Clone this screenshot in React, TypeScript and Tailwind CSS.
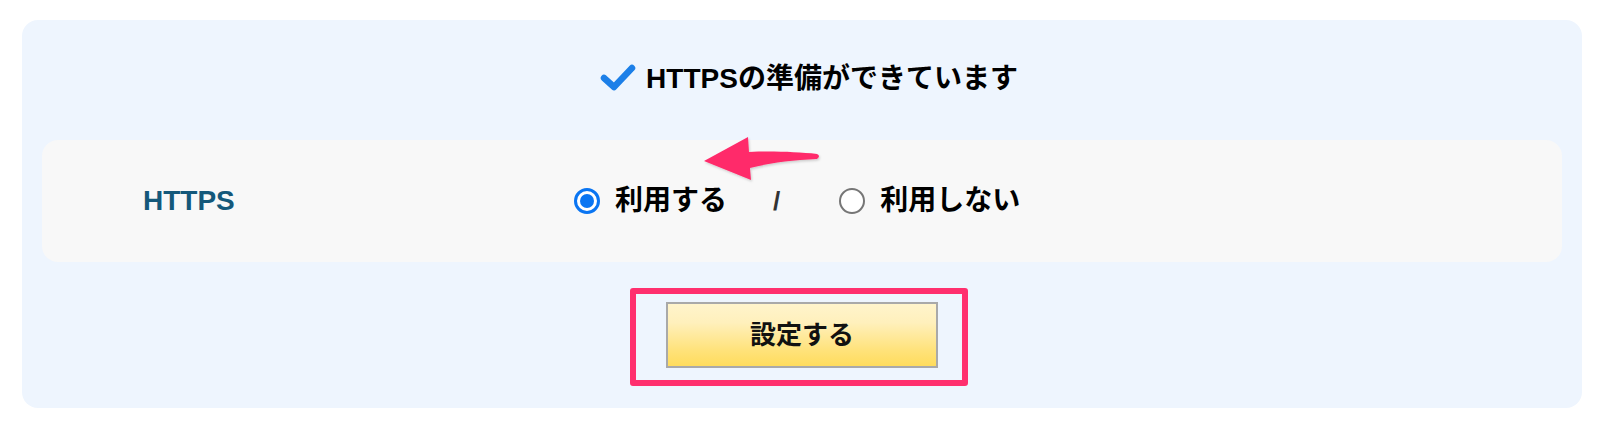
import React from "react";

const JP = { fontFamily: '"Liberation Sans", "Noto Sans CJK JP", sans-serif' };

function Radio({ checked }: { checked: boolean }) {
  if (checked) {
    return (
      <span className="flex h-[26px] w-[26px] items-center justify-center rounded-full border-[3px] border-[#0a75f2] bg-white">
        <span className="h-[14px] w-[14px] rounded-full bg-[#0a75f2]" />
      </span>
    );
  }
  return <span className="h-[26px] w-[26px] rounded-full border-2 border-[#767676] bg-white" />;
}

export default function App() {
  return (
    <div className="min-h-[432px] w-[1614px] bg-white pt-[20px] pl-[22px]" style={JP}>
      <div className="relative w-[1560px] rounded-[16px] bg-[#eef5fe] px-[20px] pt-[39px] pb-[22px]">
        <div className="flex h-[40px] items-center justify-center pl-[14px]">
          <svg width="36" height="28" viewBox="0 0 36 28" className="mr-[10px] mt-[-4px]">
            <defs>
              <filter id="b" x="-20%" y="-20%" width="140%" height="140%">
                <feGaussianBlur stdDeviation="0.7" />
              </filter>
            </defs>
            <polyline
              points="4,15 14,24 32,5"
              fill="none"
              stroke="#1a7fe8"
              strokeWidth="6.5"
              strokeLinecap="round"
              strokeLinejoin="round"
              filter="url(#b)"
            />
          </svg>
          <span className="text-[28px] font-bold leading-[40px] text-black">HTTPSの準備ができています</span>
        </div>

        <div className="mt-[41px] flex h-[122px] items-center rounded-[16px] bg-[#f8f8f8] pl-[101px]">
          <span className="w-[431px] text-[28px] font-bold text-[#14587a]">HTTPS</span>
          <label className="flex items-center">
            <Radio checked />
            <span className="ml-[15px] text-[28px] font-bold leading-[40px] text-black">利用する</span>
          </label>
          <span className="ml-[46px] text-[26px] font-bold text-[#333]">/</span>
          <label className="ml-[59px] flex items-center">
            <Radio checked={false} />
            <span className="ml-[15px] text-[28px] font-bold leading-[40px] text-black">利用しない</span>
          </label>
        </div>

        <div className="mt-[26px] flex justify-center">
          <div className="ml-[-6px] rounded-[3px] border-[6px] border-[#ff2f6e] pt-[8px] pb-[12px] pl-[30px] pr-[24px]">
            <button className="flex h-[66px] w-[272px] items-center justify-center border-2 border-[#a9a9a9] bg-[linear-gradient(180deg,#fff4cc_0%,#fff0bc_30%,#ffe27a_75%,#ffdc5c_100%)] text-[26px] font-bold text-[#111]">
              設定する
            </button>
          </div>
        </div>

        <svg
          className="absolute left-[680px] top-[112px]"
          width="125"
          height="75"
          viewBox="0 0 125 75"
        >
          <defs>
            <filter id="s" x="-10%" y="-20%" width="130%" height="150%">
              <feDropShadow dx="1" dy="1.5" stdDeviation="1.2" floodColor="#000" floodOpacity="0.18" />
            </filter>
          </defs>
          <path
            d="M2,29 L46,5 L47,20 C70,19 95,20 115,22 Q119,24 115,27 C90,28 68,31 48,36 L49,48 Z"
            fill="#ff2c6b"
            filter="url(#s)"
          />
        </svg>
      </div>
    </div>
  );
}
